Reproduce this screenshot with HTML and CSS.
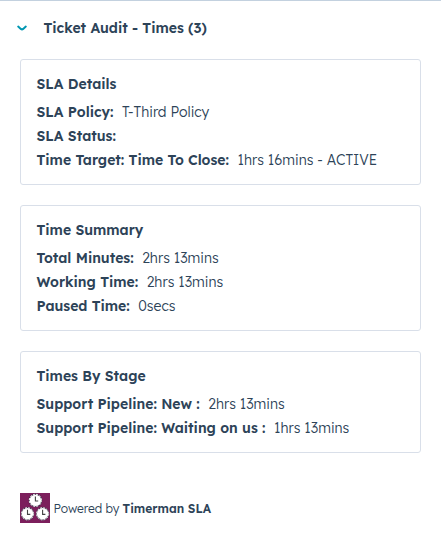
FILE: index.html
```html
<!DOCTYPE html>
<html lang="en">
<head>
  <meta charset="UTF-8">
  <meta name="viewport" content="width=device-width, initial-scale=1">
  <title>Ticket Audit - Times</title>
  <link rel="stylesheet" href="styles.css">
</head>
<body>

  <header class="panel-header">
    <svg class="chevron" width="10" height="6" viewBox="0 0 10 6">
      <path d="M1.2 1.6 L3.8 3.9 Q5 4.8 6.2 3.9 L8.8 1.6" fill="none" stroke="#0097b2" stroke-width="2" stroke-linecap="round"/>
    </svg>
    <h1>Ticket Audit - Times (3)</h1>
  </header>

  <main class="cards">
    <section class="card">
      <h2>SLA Details</h2>
      <p><strong>SLA Policy:</strong><span>T-Third Policy</span></p>
      <p><strong>SLA Status:</strong></p>
      <p><strong>Time Target: Time To Close:</strong><span>1hrs 16mins - ACTIVE</span></p>
    </section>

    <section class="card">
      <h2>Time Summary</h2>
      <p><strong>Total Minutes:</strong><span>2hrs 13mins</span></p>
      <p><strong>Working Time:</strong><span>2hrs 13mins</span></p>
      <p><strong>Paused Time:</strong><span>0secs</span></p>
    </section>

    <section class="card">
      <h2>Times By Stage</h2>
      <p><strong>Support Pipeline: New :</strong><span>2hrs 13mins</span></p>
      <p><strong>Support Pipeline: Waiting on us :</strong><span>1hrs 13mins</span></p>
    </section>
  </main>

  <footer class="powered">
    <svg width="30" height="30" viewBox="0 0 30 30">
      <defs>
        <g id="clock">
          <circle r="6.8" fill="#43304a"/>
          <circle r="5.7" fill="#fff"/>
          <circle r="6.1" fill="none" stroke="#fff" stroke-width="1" stroke-dasharray="1.9 1.294"/>
          <path d="M0 -4 V0.6 H2.8" fill="none" stroke="#444" stroke-width="1.1"/>
        </g>
      </defs>
      <rect width="30" height="30" fill="#7c1f5c"/>
      <use href="#clock" x="15.4" y="7.4"/>
      <use href="#clock" x="7.5" y="20.8"/>
      <use href="#clock" x="22.6" y="20.8"/>
    </svg>
    <div class="powered-text">Powered by <strong>Timerman SLA</strong></div>
  </footer>

</body>
</html>
```
FILE: styles.css
```css
* {
  box-sizing: border-box;
}

body {
  margin: 0;
  border-top: 1px solid #c3d1df;
  background: #fff;
  color: #2d4358;
  font-family: "Lexend Deca", Lexend, Inter, Lato, sans-serif;
  font-size: 14px;
  line-height: 24px;
}

h1, h2, p {
  margin: 0;
  font-size: 14px;
}

h1, h2, strong {
  font-weight: 600;
}

.panel-header {
  display: flex;
  align-items: center;
  gap: 17px;
  height: 58px;
  padding: 0 16.5px 4px;
}

.cards {
  display: flex;
  flex-direction: column;
  gap: 20px;
  padding: 0 20px;
}

.card {
  padding: 12px 15.5px;
  border: 1px solid #d9dfe9;
  border-radius: 3px;
}

.card h2 {
  margin-bottom: 4px;
}

.card p {
  font-weight: 300;
}

.card span {
  margin-left: 8.5px;
}

.powered {
  display: flex;
  align-items: center;
  gap: 3.5px;
  margin: 40px 20px 0;
  font-size: 12px;
  font-weight: 300;
}

.powered-text {
  padding-top: 2px;
}
```
